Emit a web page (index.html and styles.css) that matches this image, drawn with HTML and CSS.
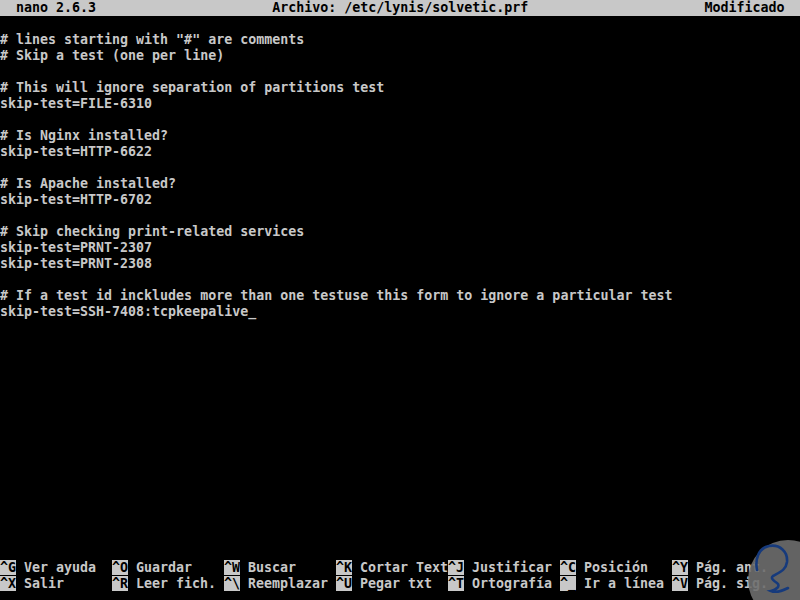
FILE: index.html
```html
<!DOCTYPE html>
<html lang="es">
<head>
  <meta charset="UTF-8" />
  <title>nano 2.6.3 - solvetic.prf</title>
  <link rel="stylesheet" href="styles.css">
</head>
<body>

<div class="screen">
  <div class="titlebar line">  nano 2.6.3                      Archivo: /etc/lynis/solvetic.prf                      Modificado  </div>

  <div class="buffer">
    <div class="line"> </div>
    <div class="line"># lines starting with "#" are comments</div>
    <div class="line"># Skip a test (one per line)</div>
    <div class="line"> </div>
    <div class="line"># This will ignore separation of partitions test</div>
    <div class="line">skip-test=FILE-6310</div>
    <div class="line"> </div>
    <div class="line"># Is Nginx installed?</div>
    <div class="line">skip-test=HTTP-6622</div>
    <div class="line"> </div>
    <div class="line"># Is Apache installed?</div>
    <div class="line">skip-test=HTTP-6702</div>
    <div class="line"> </div>
    <div class="line"># Skip checking print-related services</div>
    <div class="line">skip-test=PRNT-2307</div>
    <div class="line">skip-test=PRNT-2308</div>
    <div class="line"> </div>
    <div class="line"># If a test id inckludes more than one testuse this form to ignore a particular test</div>
    <div class="line">skip-test=SSH-7408:tcpkeepalive<span class="cursor">_</span></div>
  </div>

  <!-- shortcut bar, 7 columns of 14 cells -->
  <div class="shortcuts">
    <div class="sc"><span class="key">^G</span> Ver ayuda</div>
    <div class="sc"><span class="key">^O</span> Guardar</div>
    <div class="sc"><span class="key">^W</span> Buscar</div>
    <div class="sc"><span class="key">^K</span> Cortar Text</div>
    <div class="sc"><span class="key">^J</span> Justificar</div>
    <div class="sc"><span class="key">^C</span> Posición</div>
    <div class="sc"><span class="key">^Y</span> Pág. ant.</div>

    <div class="sc"><span class="key">^X</span> Salir</div>
    <div class="sc"><span class="key">^R</span> Leer fich.</div>
    <div class="sc"><span class="key">^\</span> Reemplazar</div>
    <div class="sc"><span class="key">^U</span> Pegar txt</div>
    <div class="sc"><span class="key">^T</span> Ortografía</div>
    <div class="sc"><span class="key">^_</span> Ir a línea</div>
    <div class="sc"><span class="key">^V</span> Pág. sig.</div>
  </div>
</div>

<!-- watermark in the corner -->
<svg class="watermark" width="60" height="64" viewBox="0 0 60 64">
  <circle cx="48" cy="44" r="40" fill="#6e6e6e" fill-opacity="0.9"/>
  <path d="M17 34 C15 24 18 12 29 10 C40 8 48 16 47 26 C46 34 40 36 33 40 C30 42 34 45 37 47 C41 50 36 54 31 55 C36 57 42 55 48 52"
        fill="none" stroke="#163a7c" stroke-width="2.6" stroke-linecap="round"/>
</svg>

</body>
</html>
```

FILE: styles.css
```css
/* --- console look, 8x16 cells --- */
html, body {
  margin: 0;
  padding: 0;
  background: #000000;
}

body {
  width: 800px;
  height: 600px;
  overflow: hidden;
  position: relative;
  color: #c8c8c8;
  font-family: "DejaVu Sans Mono", "Liberation Mono", monospace;
  font-weight: bold;
  font-size: 13.3px;
}

.screen {
  display: flex;
  flex-direction: column;
  height: 592px;
}

.line {
  height: 16px;
  line-height: 16px;
  white-space: pre;
}

.titlebar {
  background: #c8c8c8;
  color: #000000;
}

.buffer {
  flex: 1;
}

.cursor {
  color: #c8c8c8;
}

/* --- bottom help lines --- */
.shortcuts {
  display: grid;
  grid-template-columns: repeat(7, 112px);
  grid-auto-rows: 16px;
}

.sc {
  line-height: 16px;
  white-space: pre;
}

.key {
  background: #c8c8c8;
  color: #000000;
}

.watermark {
  position: absolute;
  right: 0;
  bottom: 0;
}
```
